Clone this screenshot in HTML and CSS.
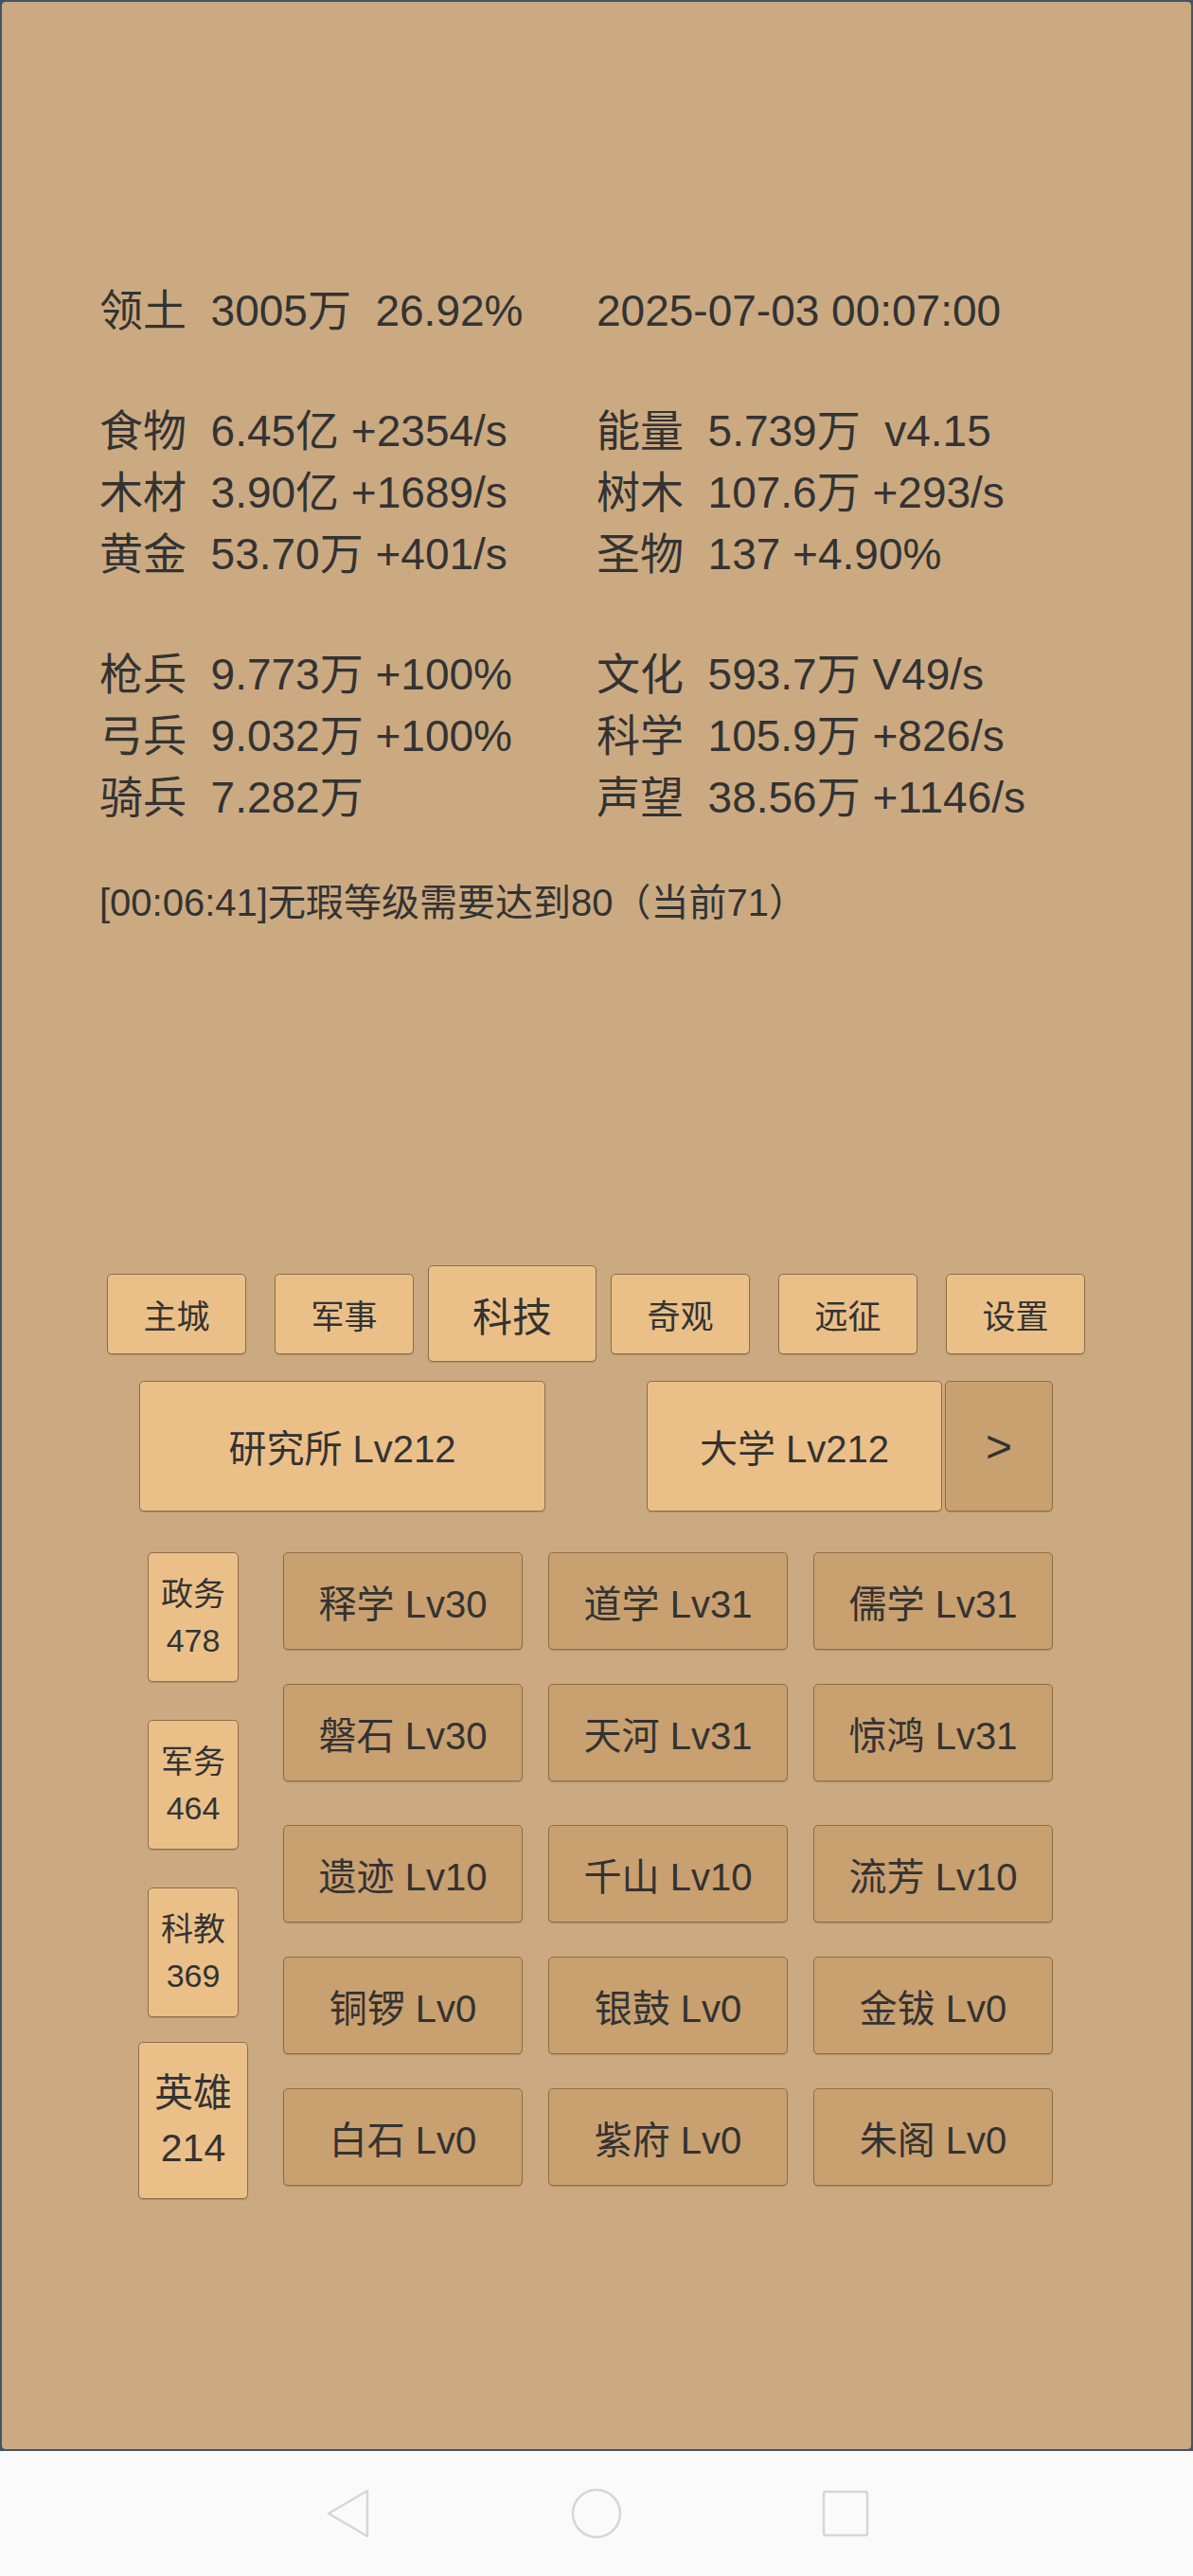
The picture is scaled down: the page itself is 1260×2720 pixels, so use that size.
FILE: index.html
```html
<!DOCTYPE html>
<html lang="zh-CN">
<head>
    <meta charset="UTF-8">
    <meta name="viewport" content="width=device-width, initial-scale=1.0">
    <title>科技</title>
    <link rel="stylesheet" href="styles.css">
</head>
<body>
<div class="frame">
    <div class="panel">
        <div class="stats">
            <div class="row"><span>领土  3005万  26.92%</span><span>2025-07-03 00:07:00</span></div>

            <div class="group">
                <div class="row"><span>食物  6.45亿 +2354/s</span><span>能量  5.739万  v4.15</span></div>
                <div class="row"><span>木材  3.90亿 +1689/s</span><span>树木  107.6万 +293/s</span></div>
                <div class="row"><span>黄金  53.70万 +401/s</span><span>圣物  137 +4.90%</span></div>
            </div>

            <div class="group">
                <div class="row"><span>枪兵  9.773万 +100%</span><span>文化  593.7万 V49/s</span></div>
                <div class="row"><span>弓兵  9.032万 +100%</span><span>科学  105.9万 +826/s</span></div>
                <div class="row"><span>骑兵  7.282万</span><span>声望  38.56万 +1146/s</span></div>
            </div>

            <div class="log">[00:06:41]无瑕等级需要达到80（当前71）</div>
        </div>

        <div class="tabs">
            <div class="slot"><button class="btn tab">主城</button></div>
            <div class="slot"><button class="btn tab">军事</button></div>
            <div class="slot"><button class="btn tab active">科技</button></div>
            <div class="slot"><button class="btn tab">奇观</button></div>
            <div class="slot"><button class="btn tab">远征</button></div>
            <div class="slot"><button class="btn tab">设置</button></div>
        </div>

        <div class="buildings">
            <button class="btn building">研究所 Lv212</button>
            <div class="building-group">
                <button class="btn building small">大学 Lv212</button>
                <button class="btn dark next">&gt;</button>
            </div>
        </div>

        <div class="lower">
            <div class="side">
                <button class="btn side-btn">政务<br>478</button>
                <button class="btn side-btn">军务<br>464</button>
                <button class="btn side-btn">科教<br>369</button>
                <button class="btn side-btn hero">英雄<br>214</button>
            </div>
            <div class="techs">
                <button class="btn dark tech">释学 Lv30</button>
                <button class="btn dark tech">道学 Lv31</button>
                <button class="btn dark tech">儒学 Lv31</button>
                <button class="btn dark tech">磐石 Lv30</button>
                <button class="btn dark tech">天河 Lv31</button>
                <button class="btn dark tech">惊鸿 Lv31</button>
                <button class="btn dark tech">遗迹 Lv10</button>
                <button class="btn dark tech">千山 Lv10</button>
                <button class="btn dark tech">流芳 Lv10</button>
                <button class="btn dark tech">铜锣 Lv0</button>
                <button class="btn dark tech">银鼓 Lv0</button>
                <button class="btn dark tech">金钹 Lv0</button>
                <button class="btn dark tech">白石 Lv0</button>
                <button class="btn dark tech">紫府 Lv0</button>
                <button class="btn dark tech">朱阁 Lv0</button>
            </div>
        </div>
    </div>
</div>
<nav class="navbar">
    <svg class="nav-icon" viewBox="0 0 54 54"><path d="M48 3 L48 51 L7 27 Z" fill="none" stroke="#d6d6d6" stroke-width="2.5" stroke-linejoin="round"/></svg>
    <svg class="nav-icon" viewBox="0 0 54 54"><circle cx="27" cy="27" r="25" fill="none" stroke="#d6d6d6" stroke-width="2.5"/></svg>
    <svg class="nav-icon" viewBox="0 0 54 54"><rect x="4" y="4" width="46" height="46" rx="2" fill="none" stroke="#d6d6d6" stroke-width="2.5"/></svg>
</nav>
</body>
</html>
```

FILE: styles.css
```css
body {
    margin: 0;
    width: 1260px;
    height: 2720px;
    font-family: "Liberation Sans", "Noto Sans CJK SC", sans-serif;
    color: #333;
    background: #fafafa;
}

.frame {
    height: 2588px;
    padding: 2px;
    box-sizing: border-box;
    background: #44536a;
}

.panel {
    height: 100%;
    background: #cbaa82;
    border-radius: 4px;
    overflow: hidden;
}

.stats {
    padding: 294px 0 0 103px;
    font-size: 46px;
}

.row {
    display: grid;
    grid-template-columns: 525px auto;
    height: 65px;
    line-height: 65px;
    white-space: pre;
}

.group {
    margin-top: 62px;
}

.log {
    margin-top: 51px;
    font-size: 40px;
    line-height: 55px;
    white-space: pre;
}

.btn {
    font-family: "Liberation Sans", "Noto Sans CJK SC", sans-serif;
    color: #333;
    background: #ebc088;
    border: 1px solid #8d6e48;
    border-radius: 5px;
    box-shadow: 0 1px 1px rgba(90, 60, 30, .25);
    padding: 0;
    cursor: pointer;
}

.btn.dark {
    background: #c9a06f;
}

.tabs {
    display: flex;
    align-items: center;
    width: 1063px;
    height: 102px;
    margin: 355px 0 0 96px;
}

.slot {
    flex: 1;
    display: flex;
    justify-content: center;
}

.tab {
    width: 147px;
    height: 85px;
    font-size: 35px;
}

.tab.active {
    width: 178px;
    height: 102px;
    font-size: 42px;
}

.buildings {
    display: flex;
    justify-content: space-between;
    width: 965px;
    height: 138px;
    margin: 20px 0 0 145px;
}

.building {
    width: 429px;
    height: 138px;
    font-size: 40px;
}

.building-group {
    display: flex;
    gap: 3px;
}

.building.small {
    width: 312px;
}

.next {
    width: 114px;
    height: 138px;
    font-size: 48px;
}

.lower {
    display: flex;
    gap: 37px;
    margin: 43px 0 0 144px;
}

.side {
    display: flex;
    flex-direction: column;
    align-items: center;
    gap: 40px;
    width: 116px;
}

.side-btn {
    width: 96px;
    height: 137px;
    font-size: 34px;
    line-height: 49px;
}

.side-btn.hero {
    width: 116px;
    height: 166px;
    margin-top: -14px;
    font-size: 41px;
    line-height: 58px;
}

.techs {
    display: grid;
    grid-template-columns: repeat(3, 253px);
    grid-template-rows: 103px 113px repeat(3, 103px);
    column-gap: 27px;
    row-gap: 36px;
    align-items: start;
}

.tech {
    height: 103px;
    font-size: 40px;
}

.navbar {
    display: flex;
    justify-content: center;
    align-items: center;
    gap: 209px;
    height: 132px;
    background: #fafafa;
}

.nav-icon {
    width: 54px;
    height: 54px;
}
```
